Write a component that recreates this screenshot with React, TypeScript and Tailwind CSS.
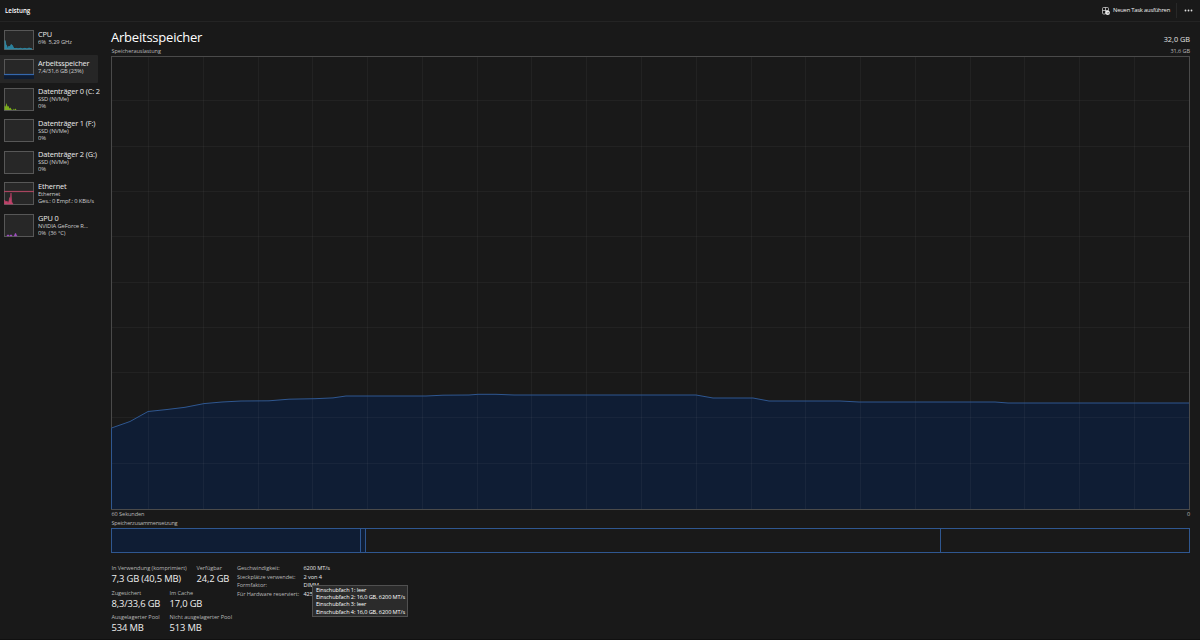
import React from 'react';

type SidebarItem = {
  title: string;
  lines: string[];
  height: string;
  thumb: string;
  active?: boolean;
  chart?: React.ReactNode;
};

const items: SidebarItem[] = [
  {
    title: 'CPU',
    lines: ['6%  5,29 GHz'],
    height: 'h-[29px]',
    thumb: 'h-[20px] mt-[4px]',
    chart: (
      <path
        d="M1 19V10.500L2 15L3 16V18L4 18L5 16L6 17.500L7 14.500L8.500 15.500L9.500 18L11 18.800L12 18.300L14 18.800L17 18.200L18 19L21 18.300L23 19L25 18L28 19Z"
        fill="#2a7f9b"
        stroke="#2f8fae"
        strokeWidth="0.7"
      />
    ),
  },
  {
    title: 'Arbeitsspeicher',
    lines: ['7,4/31,6 GB (23%)'],
    height: 'h-[28px]',
    thumb: 'h-[20px] mt-[4px]',
    active: true,
    chart: (
      <>
        <rect x="0" y="15" width="30" height="5" fill="#0f1d33" />
        <path d="M0 15.500H30" stroke="#3568ad" strokeWidth="1.200" />
      </>
    ),
  },
  {
    title: 'Datenträger 0 (C: 2',
    lines: ['SSD (NVMe)', '0%'],
    height: 'h-[32px]',
    thumb: 'h-[23px] mt-[5px]',
    chart: (
      <path
        d="M0.500 22V18L1.500 18.500L2.500 15L3.500 18.500L4.500 18L5.500 20.500L6.500 19.500L7.500 21.500L9 22L9.500 20.500L10 22L11.500 20.500L12.500 22Z"
        fill="#7bab1e"
      />
    ),
  },
  { title: 'Datenträger 1 (F:)', lines: ['SSD (NVMe)', '0%'], height: 'h-[31px]', thumb: 'h-[23px] mt-[4px]' },
  { title: 'Datenträger 2 (G:)', lines: ['SSD (NVMe)', '0%'], height: 'h-[32px]', thumb: 'h-[23px] mt-[5px]' },
  {
    title: 'Ethernet',
    lines: ['Ethernet', 'Ges.: 0 Empf.: 0 KBit/s'],
    height: 'h-[32px]',
    thumb: 'h-[23px] mt-[4px]',
    chart: (
      <>
        <path d="M0 9.500H30" stroke="#a8455f" strokeWidth="1.200" />
        <path
          d="M0.500 22V18L2 20L3 19L4 21L5 19L5.800 15.500L6.300 18L7 11L7.700 20L9 22Z"
          fill="#c0426a"
          stroke="#c0426a"
          strokeWidth="0.600"
        />
      </>
    ),
  },
  {
    title: 'GPU 0',
    lines: ['NVIDIA GeForce R...', '0%  (36 °C)'],
    height: 'h-[32px]',
    thumb: 'h-[23px] mt-[4px]',
    chart: <path d="M3 22V21H5V22ZM6 22V21H8V22ZM10 22L11.500 19L13 22Z" fill="#a04fc0" stroke="#a04fc0" strokeWidth="0.400" />,
  },
];

const GRID_X = Array.from({ length: 19 }, (_, i) => Math.round(37 + i * 54.78) + 0.5);
const GRID_Y = Array.from({ length: 9 }, (_, i) => Math.round((i + 1) * 45.3) - 0.5);

// memory usage over the last 60 seconds, in chart pixels
const USAGE =
  '0.5,372 19,365.500 37,355.500 56,353.500 74,351.300 93,347.600 111,346 130,345 158,344.800 178,343.200 204,342.700 222,341.900 235,340 315,340 332,339.200 358,339 367,338.300 385,338.300 403,339 585,339 602,342 642,342 658,345 729,345 748,346 884,346 897,347 1078,347';

function Sidebar() {
  return (
    <nav className="w-[111px] shrink-0 pt-[4px]">
      {items.map((item) => (
        <div
          key={item.title}
          className={`flex w-[98px] rounded-r-[1px] pl-[4px] ${item.height} ${item.active ? 'bg-[#262626]' : ''}`}
        >
          <div className={`w-[30px] shrink-0 bg-[#272727] ${item.thumb}`}>
            <svg className="block h-full w-[30px]">
              <rect x="0.5" y="0.5" width="29" height="calc(100% - 1px)" fill="none" stroke="#575757" />
              {item.chart}
            </svg>
          </div>
          <div className="ml-[4px] w-[62px] shrink-0 overflow-hidden pt-[4px] whitespace-pre">
            <div className="text-[7.4px] leading-[8.6px] tracking-[-0.15px] text-[#ebebeb]">{item.title}</div>
            {item.lines.map((line) => (
              <div key={line} className="text-[5.8px] leading-[7.4px] tracking-[-0.13px] text-[#cccccc]">
                {line}
              </div>
            ))}
          </div>
        </div>
      ))}
    </nav>
  );
}

function UsageChart() {
  return (
    <svg className="block h-[454px] w-[1079px]" viewBox="0 0 1079 454">
      <polygon points={`0.5,453 ${USAGE} 1078,453`} fill="#0f1d34" />
      {GRID_X.map((x) => (
        <path key={x} d={`M${x} 1V453`} stroke="#ffffff" strokeOpacity="0.045" />
      ))}
      {GRID_Y.map((y) => (
        <path key={y} d={`M1 ${y}H1078`} stroke="#ffffff" strokeOpacity="0.04" />
      ))}
      <rect x="0.5" y="0.5" width="1078" height="453" fill="none" stroke="#4a4a4a" />
      <polyline points={`0.5,453 ${USAGE}`} fill="none" stroke="#2f5790" />
    </svg>
  );
}

function Stat({ label, value, className }: { label: string; value: string; className?: string }) {
  return (
    <div className={className}>
      <div className="text-[5.6px] leading-[8px] tracking-[-0.06px] text-[#b8b8b8]">{label}</div>
      <div className="text-[9.4px] leading-[14.6px] tracking-[-0.15px] text-[#f0f0f0]">{value}</div>
    </div>
  );
}

function Details() {
  const rows = [
    ['Geschwindigkeit:', '6200 MT/s'],
    ['Steckplätze verwendet:', '2 von 4'],
    ['Formfaktor:', 'DIMM'],
    ['Für Hardware reserviert:', '425 MB'],
  ];
  return (
    <div className="relative">
      {rows.map(([label, value]) => (
        <div key={label} className="flex h-[8.7px] text-[5.6px] leading-[8px] tracking-[-0.08px]">
          <span className="w-[66.500px] text-[#b8b8b8]">{label}</span>
          <span className="text-[#e8e8e8]">{value}</span>
        </div>
      ))}
      <div className="absolute top-[21px] left-[75px] h-[32px] w-[96px] border border-[#505050] bg-[#2b2b2b] pt-[1px] pl-[3px] text-[5.6px] leading-[7.2px] tracking-[-0.1px] whitespace-nowrap text-white">
        <div>Einschubfach 1: leer</div>
        <div>Einschubfach 2: 16,0 GB, 6200 MT/s</div>
        <div>Einschubfach 3: leer</div>
        <div>Einschubfach 4: 16,0 GB, 6200 MT/s</div>
      </div>
    </div>
  );
}

export default function App() {
  return (
    <div className="flex h-[640px] w-[1200px] flex-col overflow-hidden border-b border-[#101010] bg-[#191919] font-['Open_Sans','Noto_Sans',sans-serif] text-white">
      <header className="flex h-[22px] shrink-0 items-center border-b border-[#242424] pl-[5px]">
        <h1 className="text-[6.2px] font-semibold tracking-[-0.02px]">Leistung</h1>
        <button className="ml-auto flex items-center gap-[3px] text-[5.8px] tracking-[-0.2px] text-[#f0f0f0]">
          <svg className="h-[8px] w-[8px]" viewBox="0 0 8 8" fill="none" stroke="#e0e0e0" strokeWidth="0.7">
            <path d="M3.500 7H1.500Q0.500 7 0.500 6V1.500Q0.500 0.500 1.500 0.500H5.500Q6.500 0.500 6.500 1.500V3.500M3.500 0.500V7M0.500 3.500H6.500" />
            <circle cx="5.700" cy="5.800" r="2.200" fill="#f0f0f0" stroke="none" />
            <path d="M4.700 5.800H6.600M5.900 5L6.700 5.800L5.900 6.600" stroke="#333333" strokeWidth="0.5" />
          </svg>
          Neuen Task ausführen
        </button>
        <div className="ml-[6px] h-[15px] w-px bg-[#282828]" />
        <svg className="mr-[7px] ml-[7px] h-[3px] w-[9px]" viewBox="0 0 9 3" fill="#e0e0e0">
          <circle cx="1.500" cy="1.500" r="0.900" />
          <circle cx="4.500" cy="1.500" r="0.900" />
          <circle cx="7.500" cy="1.500" r="0.900" />
        </svg>
      </header>
      <div className="flex flex-1">
        <Sidebar />
        <main className="w-[1079px]">
          <div className="flex h-[25px] items-end justify-between">
            <h2 className="text-[13px] leading-[19px] tracking-[-0.22px]">Arbeitsspeicher</h2>
            <span className="pb-[2px] text-[7.3px] leading-[12px] text-[#e4e4e4]">32,0 GB</span>
          </div>
          <div className="flex h-[9px] justify-between pl-[0.5px] text-[5.6px] leading-[8px] tracking-[-0.08px] text-[#b8b8b8]">
            <span>Speicherauslastung</span>
            <span>31,6 GB</span>
          </div>
          <UsageChart />
          <div className="flex h-[9px] justify-between pl-[0.5px] text-[5.6px] leading-[8px] tracking-[-0.08px] text-[#b8b8b8]">
            <span>60 Sekunden</span>
            <span>0</span>
          </div>
          <div className="h-[9px] pl-[0.5px] text-[5.6px] leading-[8px] tracking-[-0.25px] text-[#b8b8b8]">
            Speicherzusammensetzung
          </div>
          <div className="flex h-[25px] border border-[#2f5790]">
            <div className="w-[249px] border-r border-[#2f5790] bg-[#0f1d34]" />
            <div className="w-[5px] border-r border-[#2f5790] bg-[#0f1d34]" />
            <div className="w-[575px] border-r border-[#2f5790]" />
          </div>
          <div className="flex pt-[11px] pl-[0.5px]">
            <div className="w-[125.500px]">
              <div className="flex h-[24.500px] whitespace-nowrap">
                <Stat label="In Verwendung (komprimiert)" value="7,3 GB (40,5 MB)" className="w-[85px]" />
                <Stat label="Verfügbar" value="24,2 GB" />
              </div>
              <div className="flex h-[24.500px] whitespace-nowrap">
                <Stat label="Zugesichert" value="8,3/33,6 GB" className="w-[58px]" />
                <Stat label="Im Cache" value="17,0 GB" />
              </div>
              <div className="flex h-[24.500px] whitespace-nowrap">
                <Stat label="Ausgelagerter Pool" value="534 MB" className="w-[58px]" />
                <Stat label="Nicht ausgelagerter Pool" value="513 MB" />
              </div>
            </div>
            <Details />
          </div>
        </main>
      </div>
    </div>
  );
}
